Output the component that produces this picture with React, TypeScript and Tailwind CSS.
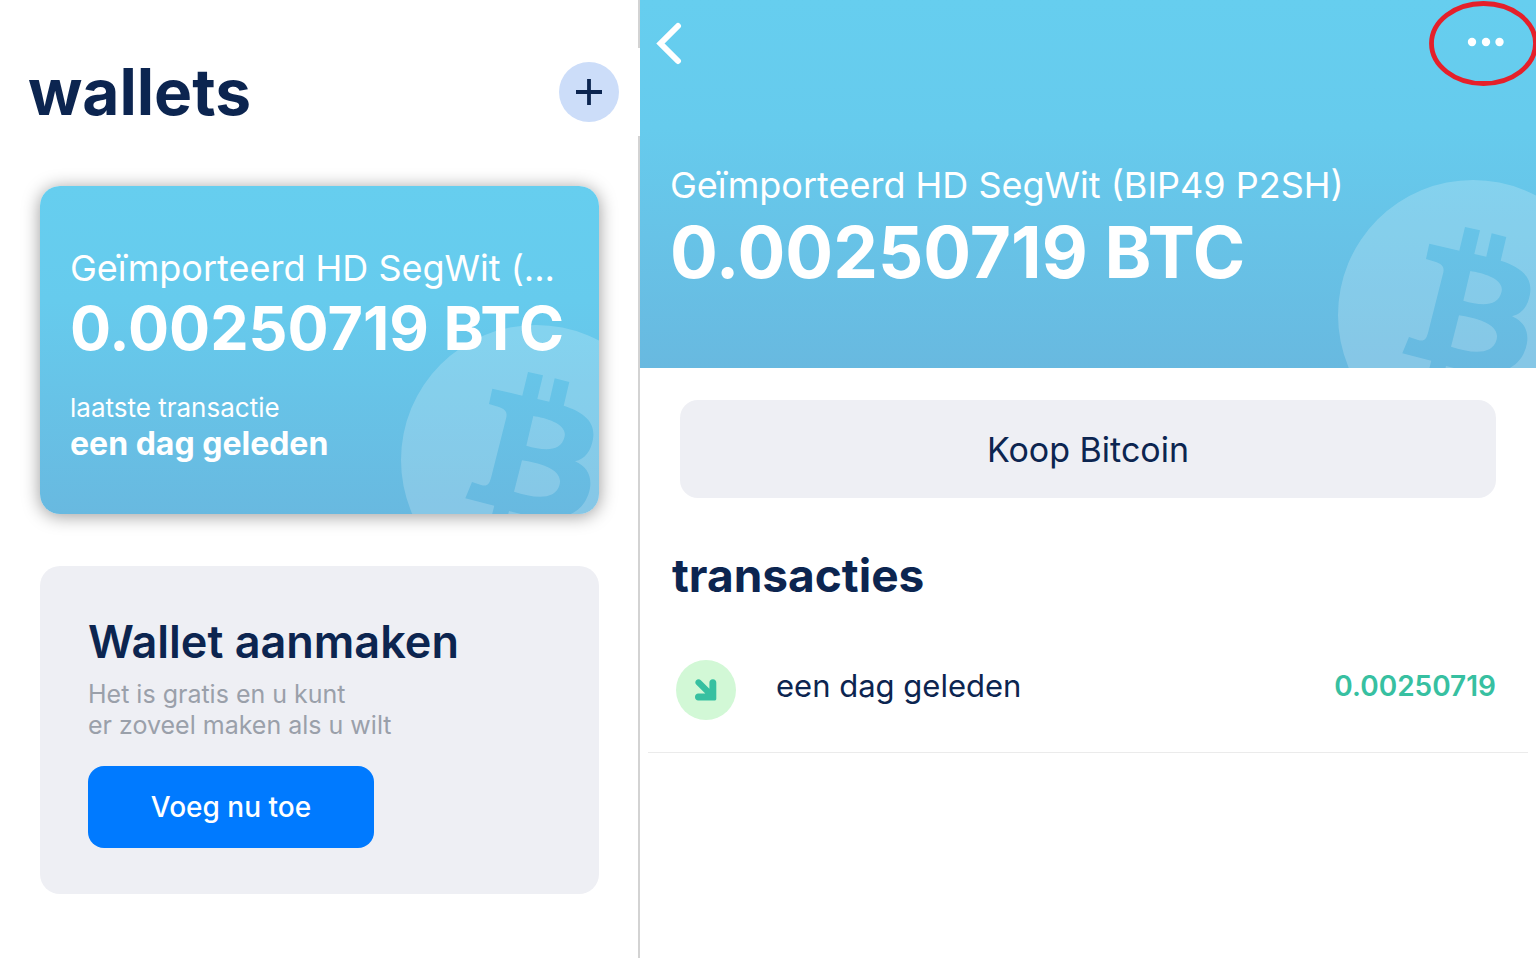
import React from "react";

function BitcoinMark() {
  return (
    <svg viewBox="0 0 270 270" className="size-[270px]" fill="#fff" fillOpacity="0.2" fillRule="evenodd" aria-hidden="true">
      <path d="M135 0A135 135 0 1 1 135 270A135 135 0 1 1 135 0Z M91.3 63.7L88 79L98 82C104 84 106.500 87 105.3 92.500L90 153C88 160 86 161.500 80 160L71 157L64.3 173.3L93.3 180.7L87 206L102 210L108 186L120 189L114 213L129 217L135 192C160 196 184 190 189 163C191 150 185 141 174 136.3C184 134 190 126 192 114C195 96 181 86.500 162.7 80.7L168.3 57L153.7 53.3L148.3 76.7L136.3 74L142 50.3L127 47L121.3 70.7Z M132.3 91C145 93 167 99 163.500 112C160 127 143 126 125.3 120.7Z M121 135.3C138 138 163 144 158.500 160C154 176 132 173 113 166.7Z" />
    </svg>
  );
}

function WalletCard() {
  return (
    <article className="relative flex h-[328px] flex-col overflow-hidden rounded-[20px] bg-linear-to-b from-[#66ceef] via-[#66cbed] via-35% to-[#68b9e0] px-[30px] pt-[58px] text-white">
      <div className="absolute top-[139px] left-[361px]">
        <BitcoinMark />
      </div>
      <div className="relative whitespace-nowrap">
        <h2 className="text-[36px] leading-[48px]">Geïmporteerd HD SegWit (...</h2>
        <p className="text-[61px] leading-[72px] font-bold">0.00250719 BTC</p>
        <p className="mt-[26px] text-[26px] leading-9">laatste transactie</p>
        <p className="text-[32px] leading-9 font-bold">een dag geleden</p>
      </div>
    </article>
  );
}

function WalletsPanel() {
  return (
    <section className="flex w-5/12 shrink-0">
      <div className="min-w-0 flex-1 pb-16">
        <header className="flex items-center justify-between pt-[52px] pr-[19px] pl-7">
          <h1 className="text-[64px] leading-[80px] font-bold">wallets</h1>
          <button type="button" aria-label="Wallet toevoegen" className="flex size-[60px] items-center justify-center rounded-full bg-[#ccddf9]">
            <svg viewBox="0 0 26 26" className="size-[26px]" stroke="#0c2550" strokeWidth="3.800" aria-hidden="true">
              <path d="M13 0V26M0 13H26" />
            </svg>
          </button>
        </header>
        <div className="mt-[54px] pr-[39px] pl-10">
          <div className="rounded-[20px] shadow-[0_2px_18px_rgba(0,0,0,0.4)]">
            <WalletCard />
          </div>
          <article className="mt-[52px] h-[328px] rounded-[20px] bg-[#eeeff4] px-12 pt-[46px]">
            <h2 className="text-[45px] leading-[60px] font-semibold">Wallet aanmaken</h2>
            <p className="mt-[7px] text-[25px] leading-[31px] text-[#9aa0aa]">
              Het is gratis en u kunt
              <br />
              er zoveel maken als u wilt
            </p>
            <button type="button" className="mt-[25px] h-[82px] w-[286px] rounded-2xl bg-[#007aff] text-[28px] font-medium text-white">
              Voeg nu toe
            </button>
          </article>
        </div>
      </div>
      <div className="flex w-[2px] flex-col" aria-hidden="true">
        <div className="h-12 bg-[#d3d3d3]" />
        <div className="h-[88px]" />
        <div className="flex-1 bg-[#d3d3d3]" />
      </div>
    </section>
  );
}

function WalletDetail() {
  return (
    <section className="min-w-0 flex-1">
      <header className="relative h-[368px] overflow-hidden bg-linear-to-b from-[#66ceef] via-[#66cbed] via-35% to-[#68b9e0] text-white">
        <div className="absolute top-[180px] -right-[72px]">
          <BitcoinMark />
        </div>
        <nav className="flex h-[88px] items-center justify-between pl-4">
          <button type="button" aria-label="Terug">
            <svg viewBox="0 0 28 44" className="h-11 w-7" fill="none" stroke="currentColor" strokeWidth="6" strokeLinecap="round" strokeLinejoin="miter" aria-hidden="true">
              <path d="M22 4L4.500 21.500L22 39" />
            </svg>
          </button>
          <button type="button" aria-label="Meer opties">
            <svg viewBox="0 0 107 88" className="h-[88px] w-[107px]" aria-hidden="true">
              <ellipse cx="54.500" cy="43.500" rx="52" ry="40" fill="none" stroke="#e5202a" strokeWidth="4.800" />
              <g fill="#fff">
                <circle cx="43" cy="42" r="4.200" />
                <circle cx="57" cy="42" r="4.200" />
                <circle cx="70.500" cy="42" r="4.200" />
              </g>
            </svg>
          </button>
        </nav>
        <div className="relative pt-[73px] pl-[30px] whitespace-nowrap">
          <h2 className="text-[36px] leading-[48px]">Geïmporteerd HD SegWit (BIP49 P2SH)</h2>
          <p className="text-[71px] leading-[86px] font-bold">0.00250719 BTC</p>
        </div>
      </header>
      <div className="px-10 pt-8">
        <button type="button" className="h-[98px] w-full rounded-[18px] bg-[#eeeff4] text-[34px]">
          Koop Bitcoin
        </button>
      </div>
      <h2 className="mt-[47px] pl-8 text-[46px] leading-[60px] font-bold">transacties</h2>
      <ul className="mx-2 mt-[31px]">
        <li className="flex h-[117px] items-center border-b border-[#ebebeb] pr-8 pb-4 pl-7">
          <span className="mt-2 flex size-[60px] items-center justify-center rounded-full bg-[#d2f8d6]">
            <svg viewBox="0 0 22 22" className="size-[22px]" aria-hidden="true">
              <path d="M3.500 0.300C2.600 0.300 1.800 0.600 1.200 1.200C0 2.400 0 4.300 1.200 5.500L10.300 14.600H3.200C1.400 14.600 0 16 0 17.800V18.300C0 20.100 1.400 21.500 3.200 21.500H19.500C20.600 21.500 21.300 20.800 21.300 19.700V3.400C21.300 1.600 19.900 0.200 18.100 0.200H17.600C15.800 0.200 14.400 1.600 14.400 3.400V9.800L5.800 1.200C5.200 0.600 4.400 0.300 3.500 0.300Z" fill="#37c0a1" />
            </svg>
          </span>
          <span className="ml-10 flex-1 text-[31px] leading-10">een dag geleden</span>
          <span className="text-[28px] leading-10 font-semibold text-[#37c0a1]">0.00250719</span>
        </li>
      </ul>
    </section>
  );
}

export default function App() {
  return (
    <main className="flex min-h-screen bg-white font-['Inter',sans-serif] text-[#0c2550]">
      <WalletsPanel />
      <WalletDetail />
    </main>
  );
}
